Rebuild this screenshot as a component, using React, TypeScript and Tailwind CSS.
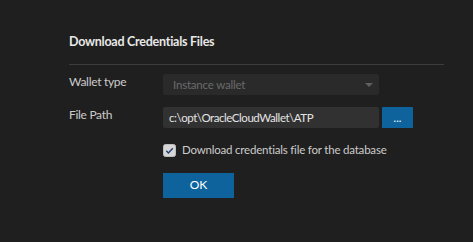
// Download Credentials Files — a small dark dialog body.
//
// Two label/field rows on a fixed label column, then a checkbox and the OK
// button hung off the same field edge so everything lines up at x=163.
// The source font runs narrow, so text is set a touch tight to keep widths.

const FONT = "font-['Lato','Noto_Sans',sans-serif]"

function FieldRow({ label, children }: { label: string; children: React.ReactNode }) {
  return (
    <div className="flex items-start">
      <span className="w-[94px] text-[12px] leading-[16px] tracking-[-0.3px] text-[#cccccc]">
        {label}
      </span>
      {children}
    </div>
  )
}

function CheckMark() {
  return (
    <svg width="13" height="13" viewBox="0 0 13 13" className="shrink-0">
      <rect x="0.5" y="0.5" width="12" height="12" rx="2" fill="#d6d6d6" stroke="#bdbdbd" />
      <path d="M3.3 6.8 L5.4 8.9 L9.8 4.2" fill="none" stroke="#1f3f73" strokeWidth="1.4" />
    </svg>
  )
}

export default function App() {
  return (
    <div className={`h-[242px] w-[473px] bg-[#1f1f1f] pl-[69px] pt-[34px] ${FONT}`}>
      <h2 className="text-[12.5px] font-bold leading-4 tracking-[-0.25px] text-[#e8e8e8]">
        Download Credentials Files
      </h2>
      <div className="mt-[14px] w-[375px] border-t border-[#3d3d3d]" />

      <div className="mt-[9px]">
        <FieldRow label="Wallet type">
          {/* disabled select: dim text, dim caret */}
          <div className="flex h-[21px] w-[216px] items-center justify-between rounded-[2px] bg-[#2a2a2a] pl-[10px] pr-[6px]">
            <span className="text-[11.5px] tracking-[-0.2px] text-[#6b6b6b]">Instance wallet</span>
            <span className="h-0 w-0 border-x-[4px] border-t-[4px] border-x-transparent border-t-[#5f5f5f]" />
          </div>
        </FieldRow>
      </div>

      <div className="mt-[12px]">
        <FieldRow label="File Path">
          <div className="flex h-[21px] w-[216px] items-center rounded-[2px] bg-[#313131] pl-[6px]">
            <span className="text-[11.5px] tracking-[-0.45px] text-[#e4e4e4]">
              c:\opt\OracleCloudWallet\ATP
            </span>
          </div>
          <button className="ml-[3px] flex h-[21px] w-[31px] items-center justify-center bg-[#0e639c] text-[11px] leading-none text-white">
            ...
          </button>
        </FieldRow>
      </div>

      <label className="mt-[14px] flex h-[16px] items-center gap-[6px] pl-[94px]">
        <CheckMark />
        <span className="text-[11.5px] leading-[16px] tracking-[-0.2px] text-[#cccccc]">
          Download credentials file for the database
        </span>
      </label>

      <div className="mt-[13px] pl-[94px]">
        <button className="h-[25px] w-[71px] bg-[#0e639c] text-[12px] text-white">OK</button>
      </div>
    </div>
  )
}
